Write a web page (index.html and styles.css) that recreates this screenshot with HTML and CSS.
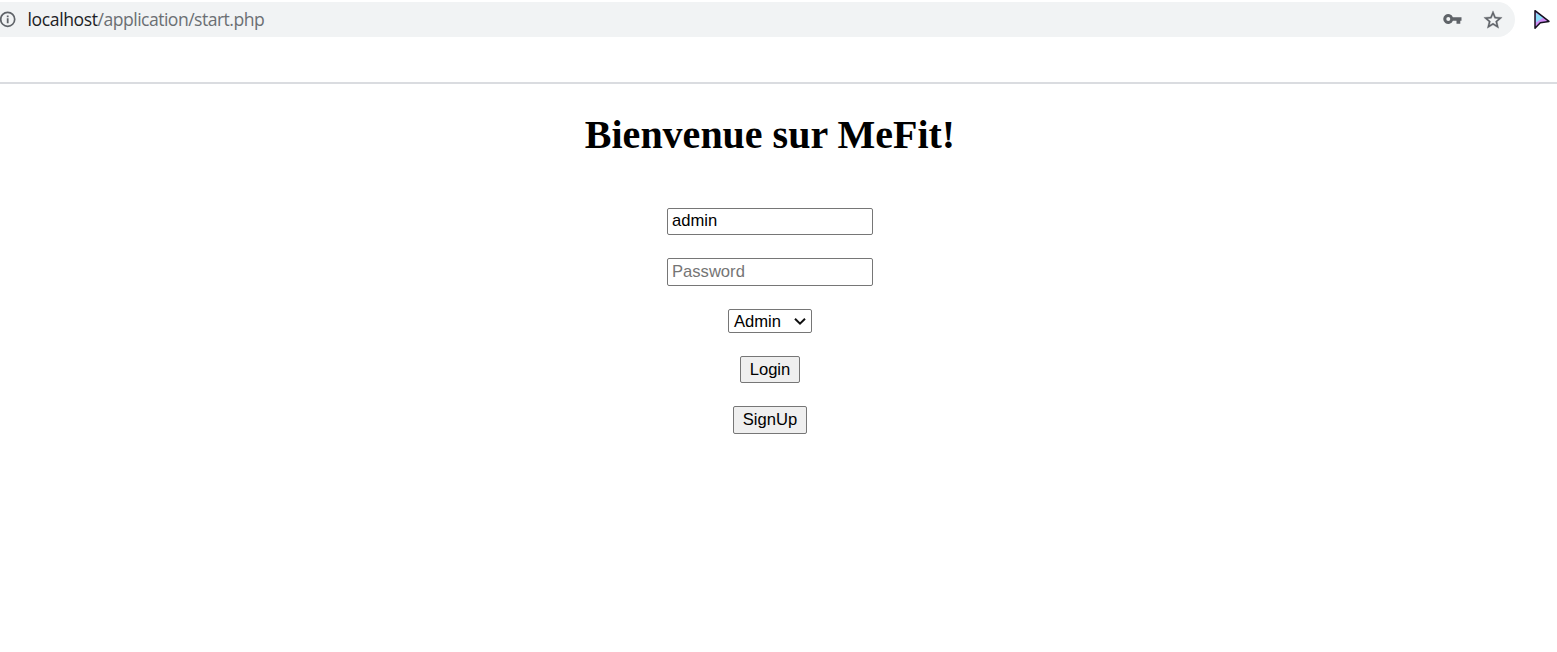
FILE: index.html
```html
<!DOCTYPE html>
<html lang="fr">
<head>
<meta charset="utf-8">
<title>MeFit</title>
<link rel="stylesheet" href="styles.css">
</head>
<body>
<header class="toolbar">
  <div class="address-bar">
    <svg class="info" width="17" height="18" viewBox="0 0 17 18"><circle cx="7.7" cy="9.3" r="7" fill="none" stroke="#5f6368" stroke-width="1.7"/><path d="M6.8 5.4h1.8v1.8H6.8zM6.8 8.3h1.8v5H6.8z" fill="#5f6368"/></svg>
    <div class="url"><span class="host">localhost</span><span class="path">/application/start.php</span></div>
    <svg class="key" width="20" height="12" viewBox="0 0 20 12"><path fill="#5f6368" fill-rule="evenodd" d="M9.9 4.2A5 5 0 1 0 9.9 7.8H13.5v3h3.8v-3H18.5V4.2zM5.3 4a2 2 0 1 1 0 4 2 2 0 0 1 0-4z"/></svg>
    <svg class="star" width="22" height="22" viewBox="0 0 24 24"><path fill="#5f6368" stroke="#5f6368" stroke-width=".35" d="M22 9.24l-7.19-.62L12 2 9.19 8.63 2 9.24l5.46 4.73L5.82 21 12 17.27 18.18 21l-1.63-7.03L22 9.24zM12 15.4l-3.76 2.27 1-4.28-3.32-2.88 4.38-.38L12 6.1l1.71 4.04 4.38.38-3.32 2.88 1 4.28L12 15.4z"/></svg>
  </div>
  <svg class="cursor" width="18" height="22" viewBox="0 0 18 22"><path d="M2 2.5V20L7.5 14.8 16 13.5z" fill="#d08df5"/><path d="M3 5v9.5L10.5 9.5z" fill="#8bdcf8"/><path d="M2 2.7V20.2L7.3 14.8 16 13.4z" fill="none" stroke="#15101f" stroke-width="1.5" stroke-linejoin="round"/></svg>
</header>
<main class="page">
  <h1 class="title">Bienvenue sur MeFit!</h1>
  <form class="form">
    <input class="field user" type="text" value="admin">
    <input class="field password" type="password" placeholder="Password">
    <div class="select"><span>Admin</span><svg width="14" height="10" viewBox="0 0 14 10"><path d="M2 2.7 7 7.7 12 2.7" fill="none" stroke="#101010" stroke-width="2"/></svg></div>
    <button class="button login" type="button">Login</button>
    <button class="button signup" type="button">SignUp</button>
  </form>
</main>
</body>
</html>
```
FILE: styles.css
```css
* { box-sizing: border-box; }
body { margin: 0; height: 652px; overflow: hidden; background: #fff; color: #000; font-family: "Liberation Serif", serif; }
.toolbar { display: flex; align-items: flex-start; height: 84px; padding-top: 2px; border-bottom: 2px solid #dadce0; }
.address-bar { display: flex; align-items: center; width: 1515px; height: 35px; padding-bottom: 1px; background: #f1f3f4; border-radius: 0 18px 18px 0; }
.info { margin-right: 10.5px; }
.url { flex: 1; color: #6b6f73; font: 17.6px/24px "Open Sans", sans-serif; white-space: nowrap; }
.host { color: #202124; letter-spacing: -0.4px; }
.path { letter-spacing: -0.53px; }
.key { margin-right: 19px; }
.star { margin: 1px 11.5px 0 0; }
.cursor { margin: 6px 0 0 18px; }
.page { display: flex; flex-direction: column; align-items: center; width: 1540px; padding-top: 28px; }
.title { margin: 0; font-size: 40px; line-height: 46px; font-weight: 700; white-space: nowrap; }
.form { display: flex; flex-direction: column; align-items: center; margin-top: 50px; font: 16.6px "Liberation Sans", sans-serif; }
.field { width: 206px; height: 27px; margin: 0 0 23px; padding: 0 4px 2px; border: 1px solid #767676; border-radius: 2px; background: #fff; color: #000; font: inherit; outline: none; }
.password { height: 28px; padding-bottom: 1px; }
.field::placeholder { color: #757575; }
.select { display: flex; align-items: center; justify-content: space-between; width: 84px; height: 24px; margin-bottom: 23px; padding: 0 4px 0 5px; border: 1px solid #767676; border-radius: 2px; line-height: 20px; }
.select span { padding-top: 1px; }
.button { height: 27px; margin: 0 0 23px; padding: 0; border: 1px solid #767676; border-radius: 2px; background: #efefef; color: #000; font: inherit; }
.login { width: 60px; }
.signup { width: 74px; height: 28px; padding-bottom: 1px; }
```
